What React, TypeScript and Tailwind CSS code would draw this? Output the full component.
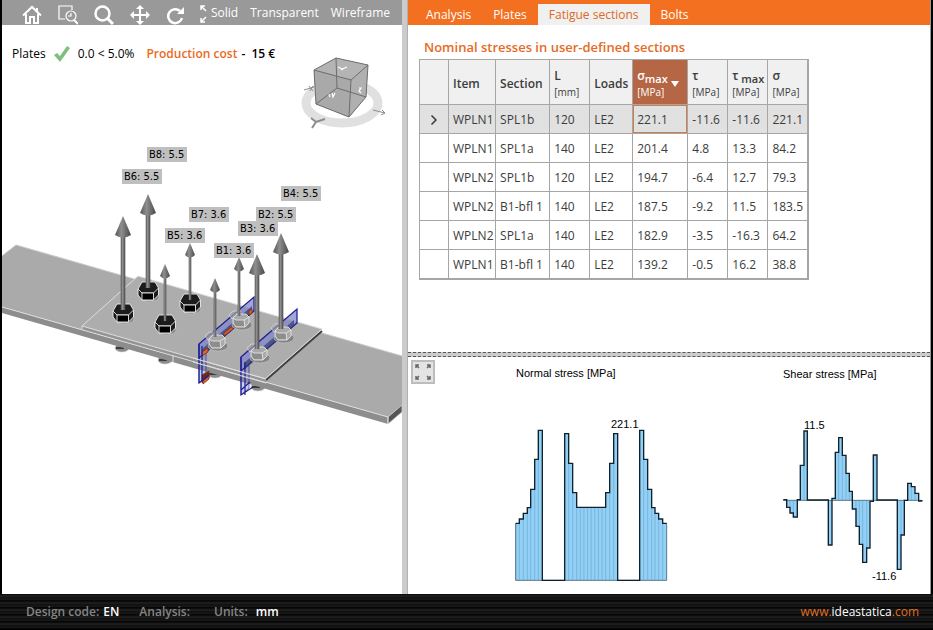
import { useState } from 'react';
import { ChevronRight } from 'lucide-react';
import clsx from 'clsx';

type Point = [number, number];

interface StressRow {
  item: string;
  section: string;
  length: number;
  loads: string;
  values: string[];
}

const rows: StressRow[] = [
  { item: 'WPLN1', section: 'SPL1b', length: 120, loads: 'LE2', values: ['221.1', '-11.6', '-11.6', '221.1'] },
  { item: 'WPLN1', section: 'SPL1a', length: 140, loads: 'LE2', values: ['201.4', '4.8', '13.3', '84.2'] },
  { item: 'WPLN2', section: 'SPL1b', length: 120, loads: 'LE2', values: ['194.7', '-6.4', '12.7', '79.3'] },
  { item: 'WPLN2', section: 'B1-bfl 1', length: 140, loads: 'LE2', values: ['187.5', '-9.2', '11.5', '183.5'] },
  { item: 'WPLN2', section: 'SPL1a', length: 140, loads: 'LE2', values: ['182.9', '-3.5', '-16.3', '64.2'] },
  { item: 'WPLN1', section: 'B1-bfl 1', length: 140, loads: 'LE2', values: ['139.2', '-0.5', '16.2', '38.8'] },
];

const tabs = ['Analysis', 'Plates', 'Fatigue sections', 'Bolts'];

// Step charts: [x where the step starts, y of the step], three units per pixel
const normalSteps: Point[] = [
  [332, 550], [343, 537], [355, 520], [367, 503], [377, 448], [389, 358], [400, 271],
  [412, 721], [479, 281], [491, 370], [503, 458], [515, 502], [602, 458], [614, 370], [626, 281],
  [638, 721], [704, 271], [716, 358], [728, 448], [740, 503], [750, 520], [761, 537], [773, 550],
];

const shearSteps: Point[] = [
  [340, 479], [350, 502], [360, 519], [370, 531], [382, 479], [391, 376], [402, 273],
  [412, 480], [475, 615], [486, 475], [496, 337], [506, 293], [517, 346], [528, 400], [538, 454],
  [547, 507], [558, 559], [568, 613], [578, 667], [590, 624], [600, 484], [610, 345],
  [621, 480], [682, 688], [693, 585], [703, 481], [713, 430], [724, 440], [735, 460], [746, 483],
];

const bolts = [
  { id: 'B8', x: 148, y: 292, tip: 194, tall: true, dark: true },
  { id: 'B6', x: 123, y: 314, tip: 216, tall: true, dark: true },
  { id: 'B7', x: 190, y: 304, tip: 243, tall: false, dark: true },
  { id: 'B5', x: 165, y: 325, tip: 264, tall: false, dark: true },
  { id: 'B3', x: 241, y: 320, tip: 257, tall: false, dark: false },
  { id: 'B1', x: 217, y: 341, tip: 278, tall: false, dark: false },
  { id: 'B4', x: 283, y: 333, tip: 233, tall: true, dark: false },
  { id: 'B2', x: 259, y: 353, tip: 254, tall: true, dark: false },
];

const boltLabels = [
  { text: 'B8: 5.5', x: 147, y: 147 },
  { text: 'B6: 5.5', x: 122, y: 169 },
  { text: 'B4: 5.5', x: 281, y: 186 },
  { text: 'B7: 3.6', x: 189, y: 207 },
  { text: 'B2: 5.5', x: 256, y: 207 },
  { text: 'B3: 3.6', x: 238, y: 221 },
  { text: 'B5: 3.6', x: 165, y: 228 },
  { text: 'B1: 3.6', x: 214, y: 243 },
];

function StepChart({ steps, end, base }: { steps: Point[]; end: number; base: number }) {
  const ends = steps.map((_, i) => (i + 1 < steps.length ? steps[i + 1][0] : end));
  const outline = steps.map(([x, y], i) => `${i ? 'L' : 'M'}${x} ${y}H${ends[i]}`).join('');
  const outlineSquare = steps.map(([x, y], i) => `${i ? `H${x}V${y}` : `M${x} ${y}`}H${ends[i]}`).join('');
  const dividers = steps.flatMap(([x, y], i) => {
    const count = Math.max(1, Math.round((ends[i] - x) / 11));
    return Math.abs(y - base) < 8
      ? []
      : Array.from({ length: count }, (_, k) => ({ x: x + (k * (ends[i] - x)) / count, y }));
  });

  return (
    <g>
      <path d={`${outline}V${base}H${steps[0][0]}Z`} fill="#93d0f5" />
      {dividers.map((d) => (
        <path key={d.x} d={`M${d.x} ${d.y}V${base}`} stroke="#6aa9d0" strokeWidth="2" />
      ))}
      <path d={`M${steps[0][0]} ${steps[0][1]}V${base}H${end}V${steps[steps.length - 1][1]}`} fill="none" stroke="#58788c" strokeWidth="3" />
      <path d={outlineSquare} fill="none" stroke="#10222e" strokeWidth="4" strokeLinejoin="miter" />
    </g>
  );
}

function Bolt({ x, y, dark }: { x: number; y: number; dark: boolean }) {
  return (
    <g transform={`translate(${x} ${y})`}>
      <ellipse cx="1" cy="5" rx="10" ry="5" fill="#858585" stroke="#c4c4c4" strokeWidth="0.6" />
      {dark ? (
        <g stroke="#ededed" strokeWidth="0.9">
          <path d="M-10-3 -6-10 7-10 10.500-4V3L5.500 8H-6L-10 3Z" fill="#1c1c1c" />
          <path d="M-10-3-6 1H5.500L10.500-4" fill="none" />
          <path d="M-6 1H5.500V8H-6Z" fill="#000" />
        </g>
      ) : (
        <g stroke="#e4e4e4" strokeWidth="0.9">
          <path d="M-12-5-8-9 0-9-3-5-9-1Z" fill="#a3a3a3" fillOpacity="0.7" strokeWidth="0.6" />
          <path d="M-8-2-4-6 5-6 8-3V3L4 7H-5L-8 3Z" fill="#a9a9a9" />
          <path d="M-7-1-5 0H3V6H-5L-7 3Z" fill="#8d8d8d" stroke="none" />
          <path d="M-8-2-5 0H3L8-3M3 0 4 7" fill="none" />
        </g>
      )}
    </g>
  );
}

function ForceArrow({ x, tip, bottom, tall }: { x: number; tip: number; bottom: number; tall: boolean }) {
  const half = tall ? 8 : 5;
  const cone = tall ? 20 : 13;
  const shaft = tall ? 4.6 : 2.6;
  return (
    <g>
      <rect x={x - shaft / 2} y={tip + cone} width={shaft} height={bottom - tip - cone} fill="url(#metal)" />
      <path
        d={`M${x} ${tip}L${x + half} ${tip + cone - 1}Q${x} ${tip + cone + 4} ${x - half} ${tip + cone - 1}Z`}
        fill="url(#metal)"
      />
    </g>
  );
}

function ViewCube() {
  return (
    <g>
      <ellipse cx="342" cy="103" rx="36" ry="20" fill="none" stroke="#e0e0e0" strokeWidth="9" />
      <g fill="none" stroke="#8c8c8c" strokeWidth="1">
        <path d="M304 90 314 87M309 86 313 91M310 91 313 86" />
        <path d="M373 110 385 113M382 110 385 113 381 115" />
        <path d="M311 118 316 122 325 119M316 122 312 128" strokeWidth="2" />
      </g>
      <path d="M336 58 368 65 366 97 349 117 316 104 314 70Z" fill="#b4b4b4" />
      <path d="M314 70 351 80 349 117 316 104Z" fill="#a9a9a9" />
      <path d="M351 80 368 65 366 97 349 117Z" fill="#b0b0b0" />
      <path
        d="M336 58 368 65 351 80 314 70ZM314 70 316 104 349 117 351 80M368 65 366 97 349 117M336 58 337 88 366 97M337 88 316 104"
        fill="none"
        stroke="#6d6d6d"
        strokeWidth="1"
      />
      <path
        d="M338 67 342 69 347 67M341 69 343 70M329 94 330 97M332 93 333 97 335 93M359 88 361 88 359 91 361 93"
        fill="none"
        stroke="#fff"
        strokeWidth="1.200"
      />
    </g>
  );
}

function JointScene() {
  return (
    <svg
      viewBox="2 25 400 569"
      preserveAspectRatio="xMinYMin meet"
      className="block h-full w-full"
      role="img"
      aria-label="Bolted joint"
    >
      <defs>
        <linearGradient id="metal" x1="0" x2="1" y1="0" y2="0">
          <stop offset="0" stopColor="#555" />
          <stop offset="0.4" stopColor="#8e8e8e" />
          <stop offset="1" stopColor="#484848" />
        </linearGradient>
      </defs>
      <ViewCube />

      {/* nuts under the plate */}
      {[[122, 348], [165, 360], [215, 374], [258, 387]].map(([x, y]) => (
        <g key={x}>
          <ellipse cx={x} cy={y} rx="7" ry="4" fill="#8b8b8b" stroke="#cfcfcf" strokeWidth="0.6" />
          <path d={`M${x - 6} ${y}H${x + 2}`} stroke="#222" strokeWidth="1.500" />
        </g>
      ))}

      {/* base plates */}
      <path d="M2 256 16 245 402 356V406L388 417 2 307Z" fill="#aaa" />
      <path d="M2 307 388 417V424L2 313Z" fill="#8d8d8d" />
      <path d="M388 417 402 405V412L388 424Z" fill="#555" stroke="#d5d5d5" strokeWidth="0.8" />
      <path d="M2 307 388 417V424" fill="none" stroke="#dedede" strokeWidth="1" />
      <path d="M2 256 16 245 402 356" fill="none" stroke="#c9c9c9" strokeWidth="1" />

      {/* splice plate */}
      <path d="M82 326 138 276 322 329 266 379Z" fill="#adadad" />
      <path d="M82 326 266 379V382L82 329Z" fill="#949494" />
      <path d="M82 329V326L138 276 322 329M82 326 266 379" fill="none" stroke="#dedede" strokeWidth="1" />
      <path d="M266 380 322 331" stroke="#404040" strokeWidth="2" />
      <path d="M265 379 321 330M173 355V362" stroke="#dedede" strokeWidth="1" />

      {/* fatigue sections */}
      <g fill="#8188c8" fillOpacity="0.75" stroke="#1c1c94" strokeWidth="1.200">
        <path d="M199 344 254 297V311L199 358Z" />
        <path d="M241 357 297 309V323L241 371Z" />
        <path d="M199 358V383L206 377V352ZM241 371V395L249 388V364Z" fillOpacity="0.4" strokeWidth="0.6" />
      </g>
      <g fill="#333a70" fillOpacity="0.7">
        <path d="M202 349 252 306V312L202 356Z" />
        <path d="M244 363 294 320V326L244 370Z" />
      </g>
      <g fill="#e06328" stroke="#7c3015" strokeWidth="0.8">
        <path d="M202 352 208 348V352L202 356ZM224 333 233 326V329L224 336ZM249 311 252 309V313L249 315Z" />
        <path d="M202 375 209 371V378L202 383Z" fill="#6c2c17" />
        <path d="M203 381 209 376V379L203 384Z" />
      </g>
      <path
        d="M199 344V383L209 375M202 346V381M241 357V395L253 387M245 362V395M241 390 250 382"
        fill="none"
        stroke="#1c1c94"
        strokeWidth="1.200"
      />
      <path d="M193 358 266 379M193 362 266 383" stroke="#dedede" strokeWidth="1" />

      {bolts.map((bolt) => (
        <Bolt key={bolt.id} x={bolt.x} y={bolt.y} dark={bolt.dark} />
      ))}
      {bolts.map((bolt) => (
        <ForceArrow
          key={bolt.id}
          x={bolt.dark ? bolt.x : bolt.x - 2}
          tip={bolt.tip}
          bottom={bolt.y - 4}
          tall={bolt.tall}
        />
      ))}
      {boltLabels.map((label) => (
        <g key={label.text}>
          <rect x={label.x} y={label.y} width="40" height="15" fill="#bfbfbf" />
          <text x={label.x + 2} y={label.y + 11} className="font-['DejaVu_Sans_Condensed','DejaVu_Sans',sans-serif] text-[11px]">
            {label.text}
          </text>
        </g>
      ))}
    </svg>
  );
}

function ViewToolbar() {
  const iconButton = 'flex h-6 w-5 items-center justify-center';
  return (
    <div className="flex h-[25px] items-center bg-[#999] text-white">
      <div className="flex gap-4 pt-1 pl-5">
        <button type="button" aria-label="Home" className={iconButton}>
          <svg width="20" height="20" viewBox="0 0 20 20" fill="none" stroke="currentColor" strokeWidth="2">
            <path d="M1 10.500 10 2 19 10.500" />
            <path d="M4 9V18H8V12H12V18H16V9" />
            <path d="M15 3V6" />
          </svg>
        </button>
        <button type="button" aria-label="Zoom window" className={iconButton}>
          <svg width="20" height="20" viewBox="0 0 20 20" fill="none" stroke="currentColor" strokeWidth="1.200">
            <path d="M7 14H1V1H14V5" />
            <circle cx="13" cy="11" r="5" />
            <path d="M13 8V11H10" />
            <path d="M16 15 20 19" strokeWidth="2" />
          </svg>
        </button>
        <button type="button" aria-label="Zoom" className={iconButton}>
          <svg width="20" height="20" viewBox="0 0 20 20" fill="none" stroke="currentColor" strokeWidth="2.500">
            <circle cx="8.500" cy="8.500" r="7" />
            <path d="M13.500 13.500 19 19" strokeWidth="3" />
          </svg>
        </button>
        <button type="button" aria-label="Pan" className={iconButton}>
          <svg width="20" height="20" viewBox="0 0 20 20" fill="currentColor">
            <path d="M10 0 14 4H11V9H16V6L20 10 16 14V11H11V16H14L10 20 6 16H9V11H4V14L0 10 4 6V9H9V4H6Z" />
          </svg>
        </button>
        <button type="button" aria-label="Rotate" className={iconButton}>
          <svg width="20" height="20" viewBox="0 0 20 20" fill="none" stroke="currentColor" strokeWidth="2.500">
            <path d="M16 13A7 7 0 1 1 14 6" />
            <path d="M18 2V9H11Z" fill="currentColor" stroke="none" />
          </svg>
        </button>
      </div>
      <button type="button" aria-label="Zoom all" className="ml-[14px] pt-[3px]">
        <svg width="7" height="20" viewBox="0 0 7 20" fill="none" stroke="currentColor" strokeWidth="1.500">
          <path d="M1 6V2H5M1 2 6 7M1 14V18H5M1 18 6 13" />
        </svg>
      </button>
      <div className="flex gap-3 pl-1 text-[12px]">
        <button type="button">Solid</button>
        <button type="button">Transparent</button>
        <button type="button">Wireframe</button>
      </div>
    </div>
  );
}

function StressTable() {
  const head = 'border border-[#a6a6a6] px-1 pt-1 text-left font-semibold';
  const cell = 'border border-[#a6a6a6] px-1 pt-0.5 whitespace-nowrap';
  return (
    <table className="w-[390px] table-fixed border-collapse border-r-2 border-b-2 border-[#a6a6a6] text-[12px] leading-4 text-[#3c3c3c]">
      <colgroup>
        <col className="w-[29px]" />
        <col className="w-[47px]" />
        <col className="w-[54px]" />
        <col className="w-[40px]" />
        <col className="w-[43px]" />
        <col className="w-[55px]" />
        <col className="w-[40px]" />
        <col className="w-[40px]" />
        <col className="w-[40px]" />
      </colgroup>
      <thead>
        <tr className="h-[45px] bg-[#f0f0f0]">
          <th className={head} aria-label="Selected" />
          <th className={head}>Item</th>
          <th className={head}>Section</th>
          <th className={head}>
            <div>L</div>
            <div className="text-[10px] font-normal">[mm]</div>
          </th>
          <th className={head}>Loads</th>
          <th className={clsx(head, 'bg-[#b56645] text-white')} aria-sort="descending">
            <div className="flex items-center justify-between pr-1">
              <div>
                <div>σ<sub className="text-[11px]">max</sub></div>
                <div className="text-[10px] font-normal">[MPa]</div>
              </div>
              <svg width="8" height="6" viewBox="0 0 8 6" fill="currentColor">
                <path d="M0 0H8L4 6Z" />
              </svg>
            </div>
          </th>
          <th className={head}>
            <div>τ</div>
            <div className="text-[10px] font-normal">[MPa]</div>
          </th>
          <th className={head}>
            <div className="whitespace-nowrap">τ<sub className="text-[11px]"> max</sub></div>
            <div className="text-[10px] font-normal">[MPa]</div>
          </th>
          <th className={head}>
            <div>σ</div>
            <div className="text-[10px] font-normal">[MPa]</div>
          </th>
        </tr>
      </thead>
      <tbody>
        {rows.map((row, index) => (
          <tr key={index} className={clsx('h-[29px]', index === 0 ? 'bg-[#e1e1e1]' : 'bg-white')}>
            <td className={cell}>
              {index === 0 && <ChevronRight className="mx-auto size-4" strokeWidth={2.5} />}
            </td>
            <td className={cell}>{row.item}</td>
            <td className={cell}>{row.section}</td>
            <td className={cell}>{row.length}</td>
            <td className={cell}>{row.loads}</td>
            {row.values.map((value, col) => (
              <td key={col} className={clsx(cell, index === 0 && col === 0 && 'shadow-[inset_0_0_0_1px_#cd7f4a]')}>
                {value}
              </td>
            ))}
          </tr>
        ))}
      </tbody>
    </table>
  );
}

function StressCharts() {
  return (
    <svg
      viewBox="408 357 522 237"
      preserveAspectRatio="xMinYMin meet"
      className="block h-full w-full font-['Liberation_Sans',Arial,sans-serif] text-[11px]"
      role="img"
      aria-label="Stress charts"
    >
      <text x="516" y="377">Normal stress [MPa]</text>
      <text x="783" y="378">Shear stress [MPa]</text>
      <g transform="translate(405 340) scale(0.33333)">
        <StepChart steps={normalSteps} end={785} base={721} />
      </g>
      <g transform="translate(670 340) scale(0.33333)">
        <StepChart steps={shearSteps} end={757} base={481} />
      </g>
      <text x="611" y="428">221.1</text>
      <text x="804" y="429">11.5</text>
      <text x="872" y="580">-11.6</text>
    </svg>
  );
}

export default function App() {
  const [activeTab, setActiveTab] = useState('Fatigue sections');

  return (
    <div className="flex h-screen flex-col overflow-hidden bg-black font-['Open_Sans','Noto_Sans',sans-serif] text-[12px] text-black">
      <main className="grid min-h-0 flex-1 grid-cols-[minmax(0,400fr)_6px_minmax(0,523fr)] border-r-2 border-l-2 border-black bg-white">
        <section className="flex min-h-0 flex-col">
          <ViewToolbar />
          <div className="relative min-h-0 flex-1">
            <JointScene />
            <div className="absolute top-5 left-[10px] flex items-center leading-[18px]">
              <span>Plates</span>
              <svg width="16" height="16" viewBox="0 0 16 16" className="mr-2 ml-2">
                <path d="M0 9 3 7 6 10 13 0 16 2 6 16Z" fill="#7fbf7f" />
              </svg>
              <span>0.0 &lt; 5.0%</span>
              <span className="ml-3 font-semibold text-[#ea6a22]">Production cost</span>
              <span className="ml-1 font-semibold">-&nbsp; 15 €</span>
            </div>
          </div>
        </section>

        <div className="border-r border-[#b0b0b0] bg-[#cbcbcb]" />

        <section className="flex min-h-0 min-w-0 flex-col border-r border-[#999]">
          <nav className="flex h-[25px] shrink-0 items-end bg-[#f37021] pl-[7px]">
            {tabs.map((tab) => (
              <button
                key={tab}
                type="button"
                onClick={() => setActiveTab(tab)}
                className={clsx(
                  'h-[21px] px-[11px] leading-[21px]',
                  tab === activeTab ? 'bg-[#f0f0f0] text-[#dc6a24]' : 'text-white',
                )}
              >
                {tab}
              </button>
            ))}
          </nav>
          <div className="min-h-0 flex-[327] pl-[11px]">
            <h2 className="pt-3 pb-0.5 pl-[5px] text-[13px] leading-5 font-semibold text-[#e56b25]">
              Nominal stresses in user-defined sections
            </h2>
            <StressTable />
          </div>
          <div className="h-[5px] shrink-0 border-y border-dashed border-[#555] bg-[#ccc]" />
          <div className="relative min-h-0 flex-[237]">
            <StressCharts />
            <button
              type="button"
              aria-label="Fit charts"
              className="absolute top-[3px] left-[3px] flex size-6 items-center justify-center border-2 border-[#bdbdbd] bg-[#e4e4e4] text-[#666]"
            >
              <svg width="16" height="16" viewBox="0 0 16 16" fill="none" stroke="currentColor" strokeWidth="1.500">
                <path d="M1 4V1H4M1 1 4 4M12 1H15V4M15 1 12 4M1 12V15H4M1 15 4 12M15 12V15H12M15 15 12 12" />
              </svg>
            </button>
          </div>
        </section>
      </main>

      <footer className="mb-px flex h-[35px] shrink-0 items-center bg-[repeating-linear-gradient(0deg,#000_0px,#1d1d1d_2px,#0c0c0c_3px,#222_5px,#050505_7px)] pr-[14px] pl-[26px] font-semibold text-[#858585]">
        <span>Design code:</span>
        <span className="ml-1 text-white">EN</span>
        <span className="ml-5">Analysis:</span>
        <span className="ml-6">Units:</span>
        <span className="ml-2 text-white">mm</span>
        <a href="#" className="ml-auto font-normal text-[#e07020]">
          www.<span className="text-white">ideastatica</span>.com
        </a>
      </footer>
    </div>
  );
}
